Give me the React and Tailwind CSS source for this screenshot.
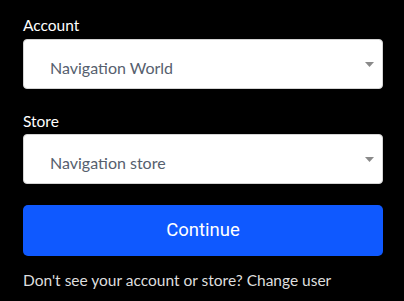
import React from "react";

function Select({ value }) {
  return (
    <div className="relative h-[50px] w-[360px] rounded-[4px] border border-[#d4d4d4] bg-white">
      <div className="pl-[26px] pt-[18px] text-[16px] leading-[20px] text-[#56606e]">{value}</div>
      <svg className="absolute right-[8px] top-[22px]" width="9" height="5" viewBox="0 0 9 5">
        <path d="M0 0 L9 0 L4.5 5 Z" fill="#8a8a8a" />
      </svg>
    </div>
  );
}

export default function App() {
  return (
    <div className="h-[301px] w-[404px] bg-black pl-[23px] pt-[15px]" style={{ fontFamily: "Lato, 'Open Sans', sans-serif" }}>
      <div className="text-[15.5px] leading-[20px] text-white">Account</div>
      <div className="mt-[4px]">
        <Select value="Navigation World" />
      </div>
      <div className="mt-[22px] text-[15.5px] leading-[20px] text-white">Store</div>
      <div className="mt-[3px]">
        <Select value="Navigation store" />
      </div>
      <button
        className="mt-[21px] flex h-[51px] w-[360px] items-center justify-center rounded-[5px] bg-[#0f59ff] text-[18.5px] text-white"
        style={{ fontFamily: "Roboto, sans-serif" }}
      >
        Continue
      </button>
      <div className="mt-[14px] text-[15.5px] leading-[20px] text-[#dedede]">
        Don't see your account or store? Change user
      </div>
    </div>
  );
}
